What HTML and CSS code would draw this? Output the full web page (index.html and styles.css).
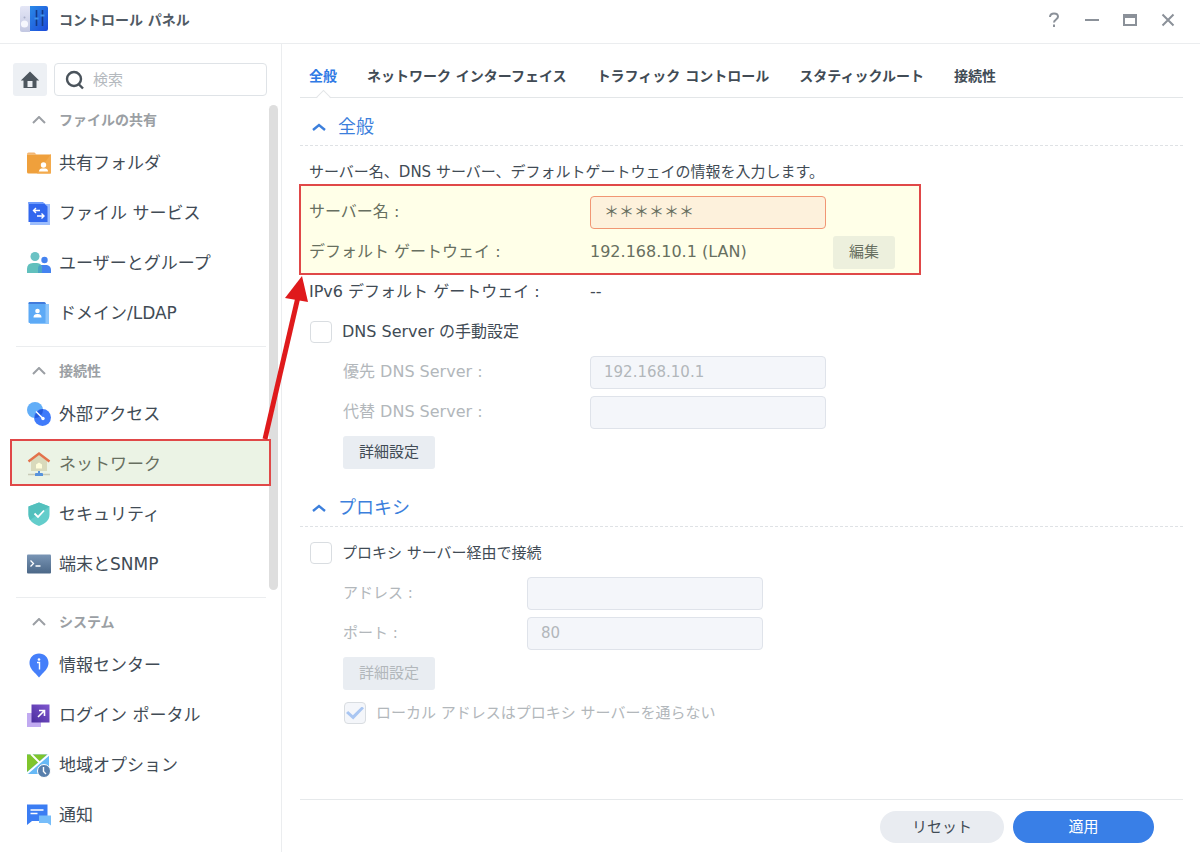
FILE: index.html
```
<!DOCTYPE html>
<html lang="ja">
<head>
    <meta charset="UTF-8">
    <meta name="viewport" content="width=device-width, initial-scale=1.0">
    <title>コントロール パネル</title>
    <link rel="stylesheet" href="styles.css">
</head>
<body>
    <header class="titlebar">
        <svg class="app-icon" viewBox="0 0 30 28">
            <defs>
                <linearGradient id="panelBlue" x1="0" y1="0" x2="1" y2="1">
                    <stop offset="0" stop-color="#2a8ae8"/>
                    <stop offset="1" stop-color="#1c49d8"/>
                </linearGradient>
                <linearGradient id="panelGrey" x1="0" y1="0" x2="0" y2="1">
                    <stop offset="0" stop-color="#e4e6f6"/>
                    <stop offset="1" stop-color="#c3c8e2"/>
                </linearGradient>
            </defs>
            <path d="M3 0h8v26H3a2 2 0 0 1-2-2V2a2 2 0 0 1 2-2z" fill="url(#panelGrey)"/>
            <path d="M11 0h16a2 2 0 0 1 2 2v21a2 2 0 0 1-2 2H11z" fill="url(#panelBlue)"/>
            <circle cx="5.500" cy="18" r="3.600" fill="#f6f7fd"/>
            <circle cx="5.500" cy="11.500" r="1" fill="#a9afc9"/>
            <path d="M17.500 4v16M23.500 4v16" stroke="#143a86" stroke-width="1.600"/>
            <path d="M15.500 12.500h4M21.500 9.500h4" stroke="#3f93ea" stroke-width="2"/>
        </svg>
        <h1>コントロール パネル</h1>
        <div class="window-buttons">
            <button type="button" aria-label="ヘルプ">
                <svg viewBox="0 0 16 16"><path d="M4 5c0-2.300 1.700-3.500 4-3.500s4 1.300 4 3.300C12 7.500 8 7.500 8 10.500" /><path d="M8 12.500v2.500"/></svg>
            </button>
            <button type="button" aria-label="最小化">
                <svg viewBox="0 0 16 16"><path d="M1 8h14"/></svg>
            </button>
            <button type="button" aria-label="最大化">
                <svg viewBox="0 0 16 16"><path d="M2 3h12v10H2z"/><path d="M1 4h14" stroke-width="4"/></svg>
            </button>
            <button type="button" aria-label="閉じる">
                <svg viewBox="0 0 16 16"><path d="M2.500 2.500l11 11M13.500 2.500l-11 11"/></svg>
            </button>
        </div>
    </header>

    <div class="window">
        <aside class="sidebar">
            <div class="tools">
                <button type="button" class="home" aria-label="ホーム">
                    <svg viewBox="0 0 20 20"><path d="M10 1.500L0.800 10.500H3.500V18h13v-7.500h2.700z" fill="#4d565e"/><path d="M7.500 11h5v6h-5z" fill="#edf0f4"/></svg>
                </button>
                <label class="search">
                    <svg viewBox="0 0 20 20"><circle cx="9" cy="9" r="7"/><path d="M13.500 14l4.500 4.500"/></svg>
                    <input type="text" placeholder="検索" aria-label="検索">
                </label>
            </div>

            <nav>
                <section class="group">
                    <h2><svg viewBox="0 0 14 8"><path d="M1 7l6-6 6 6"/></svg>ファイルの共有</h2>
                    <a href="#">
                        <svg viewBox="0 0 24 24"><path d="M0 3q0-1.500 1.500-1.500h6l2 2H0z" fill="#f3b673"/><path d="M0 3.500h24v17.500q0 1.500-1.500 1.500h-21Q0 22.500 0 21z" fill="#efa03c"/><path d="M24 3v19.500H10z" fill="#f3aa4c"/><circle cx="16.500" cy="14" r="2.700" fill="#fff"/><path d="M12 20.500c0-2.500 1.500-3 4.500-3s4.500.5 4.500 3z" fill="#fff"/></svg>
                        <span>共有フォルダ</span>
                    </a>
                    <a href="#">
                        <svg viewBox="0 0 24 24"><path d="M4 3h19v21H3z" fill="#9cbdfc"/><path d="M1.500 1h14l5 4.500V21h-19z" fill="#3167ee"/><path d="M1.500 1h14l3 2h-17z" fill="#6d9bfb"/><path d="M13 9.500H6.500M9 7L6.500 9.500 9 12M10 15h7M14.500 12.500L17 15l-2.500 2.500" fill="none" stroke="#fff" stroke-width="1.400"/></svg>
                        <span>ファイル サービス</span>
                    </a>
                    <a href="#">
                        <svg viewBox="0 0 24 24"><circle cx="8" cy="5.500" r="4.500" fill="#6ac2c4"/><circle cx="17.500" cy="9" r="3.200" fill="#4483f0"/><path d="M11 22v-5q0-3 3-3h6q4 1 4 5v3z" fill="#4483f0"/><path d="M0 22v-4q0-6 6-6h4q5 0 5 6v4z" fill="#61c0bd"/><path d="M11 22v-5q0-2 2-3 2 1 2 4v4z" fill="#4aa5c4"/></svg>
                        <span>ユーザーとグループ</span>
                    </a>
                    <a href="#">
                        <svg viewBox="0 0 24 24"><path d="M3 3h19v20H3z" fill="#8cc5fb"/><path d="M1.500 2q0-1 1-1H17q1.500 0 1.500 1.500V22h-16q-1 0-1-1z" fill="#5daaf6"/><path d="M3 1h14q1.500 0 2 2H1.500q0-2 1.500-2z" fill="#417bdc"/><circle cx="10.500" cy="10" r="2.300" fill="#fff"/><path d="M6.500 16.500c0-3 2-3.500 4-3.500s4 .5 4 3.500z" fill="#fff"/></svg>
                        <span>ドメイン/LDAP</span>
                    </a>
                </section>

                <section class="group">
                    <h2><svg viewBox="0 0 14 8"><path d="M1 7l6-6 6 6"/></svg>接続性</h2>
                    <a href="#">
                        <svg viewBox="0 0 24 24"><circle cx="8" cy="8" r="8" fill="#62aef8"/><circle cx="15.500" cy="15.500" r="8.500" fill="#407bfa"/><path d="M16 8a8 8 0 0 1-8 8 8.500 8.500 0 0 1 8-9z" fill="#245bdd"/><path d="M9 9.500l7 7" stroke="#fff" stroke-width="1.500"/><circle cx="16" cy="16.500" r="1.700" fill="#fff"/></svg>
                        <span>外部アクセス</span>
                    </a>
                    <a href="#" class="selected" aria-current="page">
                        <svg viewBox="0 0 24 24"><path d="M4 9l8-7 8 7v10H4z" fill="#d0d1c8"/><path d="M1.500 9.500L12 1.500l10.500 8" fill="none" stroke="#dc4f3c" stroke-width="2.400"/><path d="M12 10.500l3 2v4H9v-4z" fill="#fffef0"/><path d="M1 22.500h22" stroke="#b9bfc2" stroke-width="1.500"/><path d="M8 24v-2q0-1 1-1h6q1 0 1 1v2z" fill="#2f78f0"/><path d="M12 19v3" stroke="#2f78f0" stroke-width="2"/></svg>
                        <span>ネットワーク</span>
                    </a>
                    <a href="#">
                        <svg viewBox="0 0 24 24"><path d="M12 0.500l10.500 4v8c0 6-4 9-10.500 11.500C5.500 21.500 1.500 18.500 1.500 12.500v-8z" fill="#63cdcb"/><path d="M1.500 4.500L12 0.500l10.500 4L3 18q-1.500-2.500-1.500-5.500z" fill="#52c0bd"/><path d="M7.500 11.500l3.500 3.500 6-6.500" fill="none" stroke="#fff" stroke-width="1.800"/></svg>
                        <span>セキュリティ</span>
                    </a>
                    <a href="#">
                        <svg viewBox="0 0 24 24"><defs><linearGradient id="term" x1="0" y1="0" x2="0" y2="1"><stop offset="0" stop-color="#7995b5"/><stop offset="1" stop-color="#4b6787"/></linearGradient></defs><rect y="2.500" width="24" height="19" rx="1" fill="url(#term)"/><path d="M3.500 8.500l3 3-3 3M8.500 14h5" fill="none" stroke="#fff" stroke-width="1.300"/></svg>
                        <span>端末とSNMP</span>
                    </a>
                </section>

                <section class="group">
                    <h2><svg viewBox="0 0 14 8"><path d="M1 7l6-6 6 6"/></svg>システム</h2>
                    <a href="#">
                        <svg viewBox="0 0 24 24"><path d="M12 0.500c5.500 0 9.500 4 9.500 9.500 0 4-3 8-6 10.500L12 24.500l-3.500-4C5.500 18 2.500 14 2.500 10c0-5.500 4-9.500 9.500-9.500z" fill="#457ffa"/><circle cx="12" cy="6.500" r="1.300" fill="#fff"/><path d="M10 9.500h2.500v7" fill="none" stroke="#fff" stroke-width="1.400"/></svg>
                        <span>情報センター</span>
                    </a>
                    <a href="#">
                        <svg viewBox="0 0 24 24"><defs><linearGradient id="portal" x1="0" y1="1" x2="1" y2="0"><stop offset="0" stop-color="#4a2d9e"/><stop offset="1" stop-color="#8057cf"/></linearGradient></defs><path d="M0 10h14v14H0z" fill="#c1aaf1"/><path d="M4.500 1.500h18v18h-18z" fill="url(#portal)"/><path d="M11 14l6-6M12 7.500h5.500V13" fill="none" stroke="#fff" stroke-width="1.600"/></svg>
                        <span>ログイン ポータル</span>
                    </a>
                    <a href="#">
                        <svg viewBox="0 0 24 24"><path d="M0 1.500h22V21H0z" fill="#67b9f6"/><path d="M0 1.500h20L0 19z" fill="#7fc52c"/><path d="M22 1.500L0 20.500M4 1l8 8" stroke="#fff" stroke-width="1.800"/><circle cx="17" cy="18" r="6.500" fill="#587fac" stroke="#fff"/><path d="M16.500 14v4.500l2.500 2.500" fill="none" stroke="#fff" stroke-width="1.400"/></svg>
                        <span>地域オプション</span>
                    </a>
                    <a href="#">
                        <svg viewBox="0 0 24 24"><path d="M0 1.500h20.500v16.500H5l-5 4z" fill="#3b7df3"/><path d="M12 12.500h12V22.500L20.500 20H12z" fill="#76bdfa"/><path d="M3.500 7h13M3.500 10.500h7" stroke="#fff" stroke-width="1.400"/></svg>
                        <span>通知</span>
                    </a>
                </section>
            </nav>
            <div class="scrollbar"></div>
        </aside>

        <main>
            <nav class="tabs">
                <a href="#" class="active" aria-current="page">全般</a>
                <a href="#">ネットワーク インターフェイス</a>
                <a href="#">トラフィック コントロール</a>
                <a href="#">スタティックルート</a>
                <a href="#">接続性</a>
            </nav>

            <form>
                <section class="general">
                    <h3><svg viewBox="0 0 14 8"><path d="M1 7l6-5 6 5"/></svg>全般</h3>
                    <div class="rows">
                        <p class="row">サーバー名、DNS サーバー、デフォルトゲートウェイの情報を入力します。</p>
                        <div class="marked">
                            <div class="row">
                                <label for="server">サーバー名 :</label>
                                <input type="text" id="server" class="invalid" value="＊＊＊＊＊＊">
                            </div>
                            <div class="row">
                                <span class="name">デフォルト ゲートウェイ :</span>
                                <span class="value">192.168.10.1 (LAN)</span>
                                <button type="button" class="btn">編集</button>
                            </div>
                            <svg class="arrow" viewBox="0 0 50 170"><path d="M6 164L39 22" stroke="#df1a1c" stroke-width="5"/><path d="M43 1L26 23l23 4z" fill="#df1a1c"/></svg>
                        </div>
                        <div class="row">
                            <span class="name">IPv6 デフォルト ゲートウェイ :</span>
                            <span>--</span>
                        </div>
                        <div class="row">
                            <input type="checkbox" id="manual">
                            <label for="manual" class="check-label">DNS Server の手動設定</label>
                        </div>
                        <div class="row indent disabled">
                            <label for="dns1">優先 DNS Server :</label>
                            <input type="text" id="dns1" value="192.168.10.1" disabled>
                        </div>
                        <div class="row indent disabled">
                            <label for="dns2">代替 DNS Server :</label>
                            <input type="text" id="dns2" disabled>
                        </div>
                        <div class="row indent">
                            <button type="button" class="btn">詳細設定</button>
                        </div>
                    </div>
                </section>

                <section class="proxy">
                    <h3><svg viewBox="0 0 14 8"><path d="M1 7l6-5 6 5"/></svg>プロキシ</h3>
                    <div class="rows">
                        <div class="row">
                            <input type="checkbox" id="proxy">
                            <label for="proxy" class="check-label">プロキシ サーバー経由で接続</label>
                        </div>
                        <div class="row indent disabled">
                            <label for="address">アドレス :</label>
                            <input type="text" id="address" disabled>
                        </div>
                        <div class="row indent disabled">
                            <label for="port">ポート :</label>
                            <input type="text" id="port" value="80" disabled>
                        </div>
                        <div class="row indent disabled">
                            <button type="button" class="btn" disabled>詳細設定</button>
                        </div>
                        <div class="row indent disabled">
                            <input type="checkbox" id="local" checked disabled>
                            <label for="local" class="check-label">ローカル アドレスはプロキシ サーバーを通らない</label>
                        </div>
                    </div>
                </section>
            </form>

            <footer>
                <button type="button" class="pill reset">リセット</button>
                <button type="button" class="pill apply">適用</button>
            </footer>
        </main>
    </div>
</body>
</html>
```
FILE: styles.css
```
*, *::before, *::after {
    box-sizing: border-box;
}
body {
    margin: 0;
    min-height: 100vh;
    display: flex;
    flex-direction: column;
    background: #fff;
    color: #414b55;
    font-family: "DejaVu Sans", "Noto Sans CJK JP", sans-serif;
    font-size: 15px;
    line-height: 24px;
}
h1, h2, h3, p {
    margin: 0;
}
a {
    color: inherit;
    text-decoration: none;
}
button, input {
    font: inherit;
    color: inherit;
}
button {
    padding: 0;
    border: none;
    background: none;
    cursor: pointer;
}

/* title bar */
.titlebar {
    display: flex;
    align-items: center;
    height: 44px;
    padding: 0 24px 4px 19px;
    border-bottom: 1px solid #ebedef;
}
.app-icon {
    width: 30px;
    height: 28px;
    margin-right: 10px;
}
.titlebar h1 {
    font-size: 14px;
    color: #505a64;
}
.window-buttons {
    display: flex;
    gap: 22px;
    margin-left: auto;
}
.window-buttons svg {
    display: block;
    width: 16px;
    height: 16px;
    fill: none;
    stroke: #8b9199;
    stroke-width: 2;
}

.window {
    flex: 1;
    display: flex;
}

/* sidebar */
.sidebar {
    position: relative;
    flex: 0 0 282px;
    border-right: 1px solid #ebedef;
}
.tools {
    display: flex;
    gap: 7px;
    padding: 19px 14px 0 13px;
}
.home {
    display: flex;
    align-items: center;
    justify-content: center;
    width: 34px;
    height: 33px;
    border-radius: 3px;
    background: #edf0f4;
}
.home svg {
    width: 20px;
    height: 20px;
}
.search {
    flex: 1;
    display: flex;
    align-items: center;
    gap: 8px;
    height: 33px;
    padding: 0 10px;
    border: 1px solid #dfe3e7;
    border-radius: 4px;
}
.search svg {
    flex: none;
    width: 20px;
    height: 20px;
    fill: none;
    stroke: #4a535b;
    stroke-width: 2.400;
}
.search input {
    width: 100%;
    padding: 0;
    border: none;
    outline: none;
    background: none;
}
.search input::placeholder {
    color: #b4b9be;
    opacity: 1;
}
.group {
    margin: 0 15px 0 16px;
    padding-bottom: 8px;
}
.group + .group {
    border-top: 1px solid #ebedef;
}
.group h2 {
    display: flex;
    align-items: center;
    padding: 12px 0 6px 16px;
    font-size: 14px;
    color: #9b9fa4;
}
.group h2 svg {
    width: 14px;
    height: 8px;
    margin-right: 13px;
    fill: none;
    stroke: #9b9fa4;
    stroke-width: 2;
}
.group a {
    position: relative;
    display: flex;
    align-items: center;
    gap: 8px;
    height: 50px;
    padding-left: 11px;
    font-size: 17px;
}
.group a svg {
    width: 24px;
    height: 24px;
    overflow: visible;
}
.group .selected {
    z-index: 1;
}
.group .selected::before,
.group .selected::after,
.marked::after {
    content: "";
    position: absolute;
    inset: 0 -5px 3px -6px;
    pointer-events: none;
}
.group .selected::before {
    background: #e7f0fc;
}
.group .selected > * {
    position: relative;
}
.group .selected::after,
.marked::after {
    background: rgba(255, 255, 140, 0.2);
    border: 2px solid #e04848;
}
.scrollbar {
    position: absolute;
    top: 61px;
    right: 3px;
    width: 9px;
    height: 60%;
    border-radius: 5px;
    background: #dedede;
}

/* content */
main {
    flex: 1;
    display: flex;
    flex-direction: column;
    padding: 0 17px 0 18px;
}
.tabs {
    display: flex;
    gap: 30px;
    height: 54px;
    padding: 20px 9px 0;
    border-bottom: 1px solid #e3e6e8;
    font-size: 14px;
    font-weight: bold;
    white-space: nowrap;
}
.tabs a {
    position: relative;
}
.tabs .active {
    color: #2f7ae5;
}
.tabs .active::after {
    content: "";
    position: absolute;
    left: 9px;
    bottom: -6px;
    width: 11px;
    height: 11px;
    border: 1px solid #e3e6e8;
    border-right: none;
    border-bottom: none;
    background: linear-gradient(135deg, #fff 50%, transparent 50%);
    transform: rotate(45deg);
}
form {
    flex: 1;
    padding-top: 11px;
}
h3 {
    display: flex;
    align-items: center;
    height: 37px;
    padding-left: 12px;
    border-bottom: 1px dashed #dfe2e5;
    font-size: 18px;
    font-weight: normal;
    color: #3c7fdc;
}
h3 svg {
    width: 14px;
    height: 8px;
    margin-right: 12px;
    fill: none;
    stroke: #3c7fdc;
    stroke-width: 2.400;
}
.proxy {
    margin-top: 18px;
}
.rows {
    padding: 6px 0 0 9px;
}
.row {
    display: flex;
    align-items: center;
    height: 40px;
    white-space: nowrap;
}
.row label, .row .name {
    width: 281px;
}
.row .value {
    width: 243px;
}
.general label, .general span {
    font-size: 16px;
}
.indent {
    padding-left: 34px;
}
.indent label {
    width: 247px;
}
.proxy .indent label {
    width: 184px;
}
.row .check-label, .proxy .indent .check-label {
    width: auto;
}
.disabled {
    color: #b2b7bb;
}
.row input[type="text"] {
    width: 236px;
    height: 33px;
    padding: 0 13px;
    border: 1px solid #dfe3ea;
    border-radius: 4px;
}
.row input[type="text"]:disabled {
    background: #f4f6fa;
}
.row input.invalid[type="text"] {
    padding-bottom: 4px;
    border-color: #ee7c6e;
    background: #fdeef0;
}
input[type="checkbox"] {
    appearance: none;
    flex: none;
    width: 22px;
    height: 22px;
    margin: 0 10px 0 1px;
    border: 1px solid #d9dde1;
    border-radius: 4px;
    background: #fff;
}
input[type="checkbox"]:checked {
    display: grid;
    place-items: center;
    background: #f4f6fa;
}
input[type="checkbox"]:checked::before {
    content: "";
    width: 18px;
    height: 13px;
    background: #a9c6f2;
    clip-path: polygon(0 50%, 12% 34%, 38% 68%, 88% 0, 100% 14%, 40% 100%);
}
.btn {
    height: 33px;
    padding: 0 16px;
    border-radius: 3px;
    background: #e9edf2;
}
.marked {
    position: relative;
}
.marked::after {
    inset: -8px auto -3px -10px;
    width: 622px;
}
.arrow {
    position: absolute;
    left: -50px;
    top: 83px;
    width: 50px;
    height: 170px;
    z-index: 1;
    pointer-events: none;
}
footer {
    display: flex;
    justify-content: flex-end;
    gap: 9px;
    padding: 11px 29px 9px 0;
    border-top: 1px solid #e6e9eb;
}
.pill {
    height: 32px;
    border-radius: 16px;
}
.reset {
    width: 124px;
    background: #e9ecf1;
}
.apply {
    width: 141px;
    background: #397fe7;
    color: #fff;
}
```
